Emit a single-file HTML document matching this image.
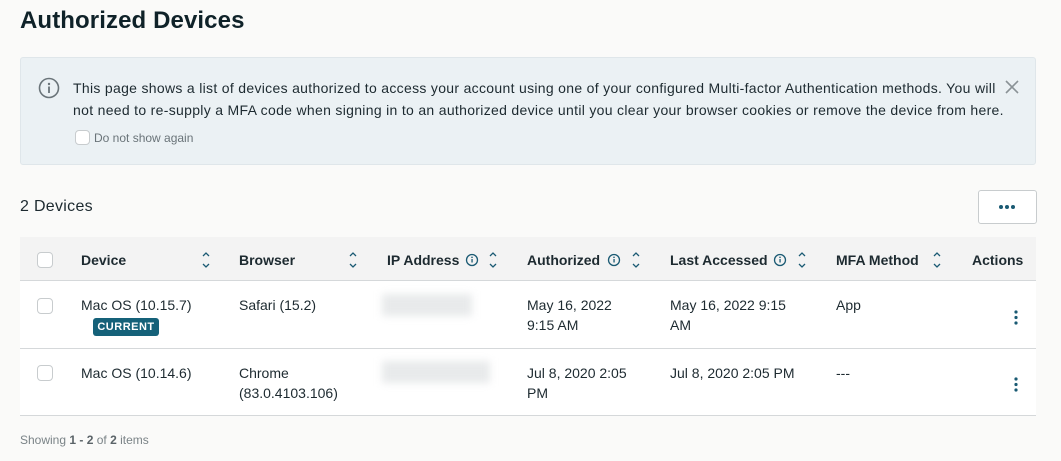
<!DOCTYPE html>
<html><head><style>
*{box-sizing:border-box;margin:0;padding:0}
body{width:1061px;height:461px;background:#fafaf9;font-family:"Liberation Sans",sans-serif;color:#1d2a30;position:relative;overflow:hidden}
.a{position:absolute;white-space:nowrap}
h1{position:absolute;left:20px;top:7px;font-size:24px;font-weight:700;color:#0f2229;letter-spacing:0.1px}
.alert{position:absolute;left:20px;top:57px;width:1016px;height:108px;background:#ebf1f4;border:1px solid #dfe6ea;border-radius:3px}
.t{font-size:14px;line-height:22px;color:#1d2a30;letter-spacing:0.31px}
.cb{position:absolute;width:16px;height:16px;border:1px solid #c8ccce;border-radius:4px;background:#fff}
.table{position:absolute;left:20px;top:237px;width:1016px;height:179px;background:#fff}
.hdr{position:absolute;left:0;top:0;width:1016px;height:44px;background:#f3f3f3;border-bottom:1px solid #d5d8da}
.h{font-size:14px;font-weight:700;color:#1d2a30;top:15px}
.sep{position:absolute;left:0;width:1016px;height:1px;background:#d5d8da}
.c{font-size:14px;line-height:20px}
</style></head><body>
<h1>Authorized Devices</h1>
<div class="alert">
<svg class="a" style="left:17px;top:19px" width="22" height="22" viewBox="0 0 22 22"><circle cx="11" cy="11" r="9.5" fill="none" stroke="#6a7479" stroke-width="1.6"/><circle cx="11" cy="7" r="1.2" fill="#6a7479"/><rect x="10.1" y="9.5" width="1.8" height="6.5" fill="#6a7479"/></svg>
<div class="a t" style="left:52px;top:19px">This page shows a list of devices authorized to access your account using one of your configured Multi-factor Authentication methods. You will<br>not need to re-supply a MFA code when signing in to an authorized device until you clear your browser cookies or remove the device from here.</div>
<div class="cb" style="left:54px;top:72px;width:15px;height:15px"></div>
<div class="a" style="left:73px;top:73px;font-size:12px;color:#6a7479">Do not show again</div>
<svg class="a" style="left:983px;top:21px" width="16" height="16" viewBox="0 0 16 16"><path d="M2 2L14 14M14 2L2 14" stroke="#8a9296" stroke-width="1.6"/></svg>
</div>
<div class="a" style="left:20px;top:198px;font-size:16px;color:#1d2a30;letter-spacing:0.3px">2 Devices</div>
<div class="a" style="left:978px;top:190px;width:59px;height:34px;border:1px solid #c8ccce;border-radius:3px;background:#fff"></div>
<svg class="a" style="left:998px;top:204px" width="18" height="6"><circle cx="3" cy="3" r="2" fill="#1a5a73"/><circle cx="9" cy="3" r="2" fill="#1a5a73"/><circle cx="15" cy="3" r="2" fill="#1a5a73"/></svg>
<div class="table">
<div class="hdr">
<div class="cb" style="left:17px;top:15px"></div>
<div class="a h" style="left:61px">Device</div>
<div class="a h" style="left:219px">Browser</div>
<div class="a h" style="left:367px">IP Address</div>
<div class="a h" style="left:507px">Authorized</div>
<div class="a h" style="left:650px">Last Accessed</div>
<div class="a h" style="left:816px">MFA Method</div>
<div class="a h" style="left:952px">Actions</div>
</div>
<div class="sep" style="top:111px"></div>
<div class="sep" style="top:178px"></div>
<div class="cb" style="left:17px;top:61px"></div>
<div class="a c" style="left:61px;top:58px">Mac OS (10.15.7)</div>
<div class="a" style="left:73px;top:81px;width:66px;height:18px;background:#156179;border-radius:3px;color:#fff;font-size:11px;font-weight:700;text-align:center;line-height:18px;letter-spacing:0.5px">CURRENT</div>
<div class="a c" style="left:219px;top:58px">Safari (15.2)</div>
<div class="a" style="left:362px;top:57px;width:90px;height:22px;background:#e8eaeb;filter:blur(4px)"></div>
<div class="a c" style="left:507px;top:58px">May 16, 2022<br>9:15 AM</div>
<div class="a c" style="left:650px;top:58px">May 16, 2022 9:15<br>AM</div>
<div class="a c" style="left:816px;top:58px">App</div>
<div class="cb" style="left:17px;top:128px"></div>
<div class="a c" style="left:61px;top:126px">Mac OS (10.14.6)</div>
<div class="a c" style="left:219px;top:126px">Chrome<br>(83.0.4103.106)</div>
<div class="a" style="left:362px;top:124px;width:108px;height:22px;background:#e8eaeb;filter:blur(4px)"></div>
<div class="a c" style="left:507px;top:126px">Jul 8, 2020 2:05<br>PM</div>
<div class="a c" style="left:650px;top:126px">Jul 8, 2020 2:05 PM</div>
<div class="a c" style="left:816px;top:126px">---</div>
</div>
<svg class="a" style="left:0;top:0" width="1061" height="461">
<g fill="none" stroke="#1a5a73" stroke-width="1.3">
<path d="M203 256l3-3 3 3M203 264l3 3 3-3"/>
<path d="M350 256l3-3 3 3M350 264l3 3 3-3"/>
<path d="M490 256l3-3 3 3M490 264l3 3 3-3"/>
<path d="M633 256l3-3 3 3M633 264l3 3 3-3"/>
<path d="M799 256l3-3 3 3M799 264l3 3 3-3"/>
<path d="M934 256l3-3 3 3M934 264l3 3 3-3"/>
<circle cx="472" cy="260" r="5.5"/><circle cx="614" cy="260" r="5.5"/><circle cx="780" cy="260" r="5.5"/>
</g>
<g fill="#1a5a73">
<rect x="471.4" y="259" width="1.3" height="3.5"/><circle cx="472" cy="257.3" r="0.8"/>
<rect x="613.4" y="259" width="1.3" height="3.5"/><circle cx="614" cy="257.3" r="0.8"/>
<rect x="779.4" y="259" width="1.3" height="3.5"/><circle cx="780" cy="257.3" r="0.8"/>
<circle cx="1016" cy="312" r="1.6"/><circle cx="1016" cy="317.5" r="1.6"/><circle cx="1016" cy="323" r="1.6"/>
<circle cx="1016" cy="379" r="1.6"/><circle cx="1016" cy="384.5" r="1.6"/><circle cx="1016" cy="390" r="1.6"/>
</g>
</svg>
<div class="a" style="left:20px;top:433px;font-size:12px;color:#7a8387">Showing <b style="color:#5a6368">1 - 2</b> of <b style="color:#5a6368">2</b> items</div>
</body></html>
